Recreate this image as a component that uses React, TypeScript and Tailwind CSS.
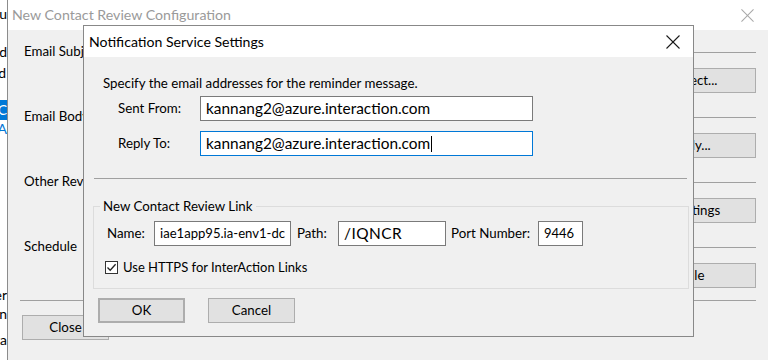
import type { ReactNode } from 'react';

const font = "font-['Lato',sans-serif]";

function CloseGlyph({ size, color }: { size: number; color: string }) {
  return (
    <svg width={size} height={size} viewBox="0 0 14 14" fill="none" stroke={color} strokeWidth="1.1">
      <line x1="0.5" y1="0.5" x2="13.5" y2="13.5" />
      <line x1="13.5" y1="0.5" x2="0.5" y2="13.5" />
    </svg>
  );
}

function WinButton({ children, className = '' }: { children: ReactNode; className?: string }) {
  return (
    <div
      className={`flex h-[25px] items-center justify-center border border-[#adadad] bg-[#e1e1e1] text-[13.3px] whitespace-nowrap ${className}`}
    >
      {children}
    </div>
  );
}

function TextBox({ children, className = '' }: { children: ReactNode; className?: string }) {
  return (
    <div
      className={`flex h-[25px] items-center overflow-hidden border bg-white px-[5px] whitespace-nowrap ${className}`}
    >
      {children}
    </div>
  );
}

// Sliver of another app window on the far left
function LeftStrip() {
  const row = 'flex h-[18px] items-center justify-end whitespace-nowrap text-[14px] leading-[18px]';
  return (
    <div className="flex w-[7px] shrink-0 flex-col overflow-hidden bg-white">
      <div className={`${row} mt-[5px]`}>You</div>
      <div className={`${row} mt-[20px]`}>Sand</div>
      <div className={`${row} mt-[3px]`}>
        Sed<span className="ml-px h-[12px] w-[2px] bg-[#e8a13a]" />
      </div>
      <div className={`${row} mt-[18px] h-[20px] bg-[#0078d7] text-white`}>C</div>
      <div className={`${row} h-[14px] text-[#0078d7]`}>A</div>
      <div className={`${row} mt-[148px]`}>Other</div>
      <div className={`${row} mt-px`}>On</div>
      <div className={`${row} mt-[8px]`}>Data</div>
    </div>
  );
}

const sections = [
  { label: 'Email Subject', button: 'Edit Subject...' },
  { label: 'Email Body', button: 'Edit Body...' },
  { label: 'Other Review Settings', button: 'Other Settings' },
  { label: 'Schedule', button: 'Schedule' },
];

function ConfigWindow() {
  return (
    <div className="flex h-full flex-1 flex-col border-l border-[#8c8c8c]">
      {/* Title bar (inactive) */}
      <div className="flex h-[30px] shrink-0 items-center justify-between bg-white pl-[4px] pr-[14px]">
        <span className="text-[14.2px] text-[#9a9a9a]">New Contact Review Configuration</span>
        <CloseGlyph size={13} color="#a8a8a8" />
      </div>

      <div className="flex flex-1 flex-col bg-[#f0f0f0] pl-[12px] pr-[12px] pt-[14px]">
        {sections.map((s) => (
          <div key={s.label} className="flex flex-col">
            <div className="flex h-[16px] items-center pl-[4px]">
              <span className="whitespace-nowrap text-[13.3px]">{s.label}</span>
              <div className="ml-3 h-px flex-1 bg-[#a0a0a0]" />
            </div>
            <div className="mb-[16px] mt-[8px] flex justify-end">
              <WinButton className="w-[156px]">{s.button}</WinButton>
            </div>
          </div>
        ))}
        <div className="-mt-[4px] h-px bg-[#a0a0a0]" />
        <WinButton className="ml-[2px] mt-[14px] w-[87px]">Close</WinButton>
      </div>
    </div>
  );
}

function NotificationDialog() {
  return (
    <div className="absolute left-[83px] top-[25px] flex h-[312px] w-[611px] flex-col border border-[#888888] bg-[#f0f0f0]">
      {/* Title bar */}
      <div className="flex h-[31px] shrink-0 items-center justify-between bg-white pl-[5px] pr-[13px]">
        <span className="text-[14.1px]">Notification Service Settings</span>
        <CloseGlyph size={14} color="#1a1a1a" />
      </div>

      <div className="flex flex-col text-[13.3px]">
        <p className="ml-[19px] mt-[17px] leading-[18px]">Specify the email addresses for the reminder message.</p>

        <div className="ml-[34px] mt-[4px] flex items-center">
          <span className="w-[82px]">Sent From:</span>
          <TextBox className="w-[333px] border-[#7a7a7a] text-[15.4px]">kannang2@azure.interaction.com</TextBox>
        </div>
        <div className="ml-[34px] mt-[10px] flex items-center">
          <span className="w-[82px]">Reply To:</span>
          <TextBox className="w-[333px] border-[#0078d7] text-[15.4px]">
            kannang2@azure.interaction.com
            <span className="ml-px h-[16px] w-px bg-black" />
          </TextBox>
        </div>

        <div className="ml-[10px] mr-[6px] mt-[22px] h-px bg-[#a0a0a0]" />

        {/* Group box */}
        <div className="relative ml-[9px] mr-[4px] mt-[27px] h-[83px] border border-[#dcdcdc] pl-[13px] pt-[14px]">
          <span className="absolute -top-[10px] left-[6px] bg-[#f0f0f0] px-[3px] leading-[18px]">
            New Contact Review Link
          </span>
          <div className="flex items-center">
            <span className="w-[47px]">Name:</span>
            <TextBox className="w-[137px] border-[#7a7a7a] text-[13.1px]">iae1app95.ia-env1-dc</TextBox>
            <span className="ml-[6px] w-[41px]">Path:</span>
            <TextBox className="w-[108px] border-[#7a7a7a] text-[15.4px] tracking-[0.5px]">/IQNCR</TextBox>
            <span className="ml-[5px] w-[87px]">Port Number:</span>
            <TextBox className="w-[45px] border-[#7a7a7a] text-[13px]">9446</TextBox>
          </div>
          <div className="-ml-[2px] mt-[12px] flex items-center">
            <div className="flex h-[13px] w-[13px] items-center justify-center border border-[#333333] bg-white">
              <svg width="11" height="11" viewBox="0 0 11 11" fill="none" stroke="#222" strokeWidth="1.3">
                <polyline points="1.5,5.5 4.2,8.3 9.6,2.2" />
              </svg>
            </div>
            <span className="ml-[5px] text-[13px]">Use HTTPS for InterAction Links</span>
          </div>
        </div>

        <div className="ml-[14px] mt-[9px] flex">
          <WinButton className="w-[87px] border-2 border-[#0078d7]">OK</WinButton>
          <WinButton className="ml-[23px] w-[87px]">Cancel</WinButton>
        </div>
      </div>
    </div>
  );
}

export default function App() {
  return (
    <div className={`relative h-[360px] w-[768px] overflow-hidden bg-white text-black ${font}`}>
      <div className="flex h-full">
        <LeftStrip />
        <ConfigWindow />
      </div>
      <NotificationDialog />
    </div>
  );
}
